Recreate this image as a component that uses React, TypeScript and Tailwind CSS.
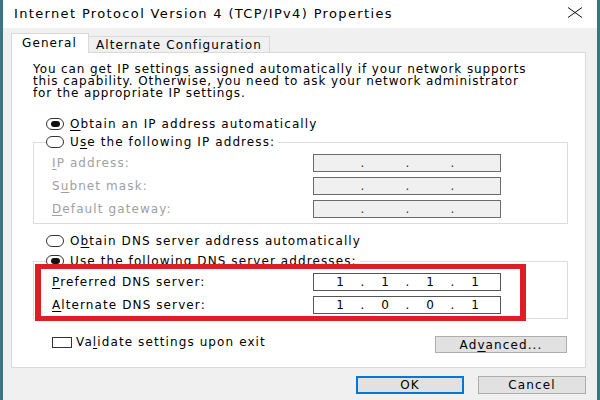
import { Fragment, ReactNode } from "react";

function Key({ children }: { children: ReactNode }) {
  return <span className="underline underline-offset-[2px]">{children}</span>;
}

function Radio({ checked }: { checked?: boolean }) {
  return (
    <span className="flex h-[12px] w-[18px] shrink-0 items-center justify-center rounded-full border border-[#333] bg-white">
      {checked && <span className="h-[6px] w-[9px] rounded-full bg-[#111]" />}
    </span>
  );
}

function RadioRow({ checked, children }: { checked?: boolean; children: ReactNode }) {
  return (
    <div className="flex h-[14px] items-center gap-[6px] bg-white pr-[3px]">
      <Radio checked={checked} />
      <span className="whitespace-nowrap">{children}</span>
    </div>
  );
}

function IpField({ octets, disabled }: { octets: string[]; disabled?: boolean }) {
  return (
    <div
      className={`flex h-[18px] w-[188px] items-center border pl-[8px] tracking-normal ${
        disabled ? "border-[#6b6b6b] bg-[#f0f0f0] text-[#333]" : "border-[#555] bg-white text-black"
      }`}
    >
      {octets.map((o, i) => (
        <Fragment key={i}>
          {i > 0 && <span className="w-[9px] text-center">.</span>}
          <span className="w-[36px] text-center">{o}</span>
        </Fragment>
      ))}
    </div>
  );
}

function FieldRow({ label, octets, disabled }: { label: ReactNode; octets: string[]; disabled?: boolean }) {
  return (
    <div className="flex h-[18px] items-center">
      <span className={`w-[261px] whitespace-nowrap ${disabled ? "text-[#a0a0a0]" : "text-black"}`}>{label}</span>
      <IpField octets={octets} disabled={disabled} />
    </div>
  );
}

const empty = ["", "", "", ""];

export default function App() {
  return (
    <div className="flex h-[400px] w-[600px] flex-col overflow-hidden border-x-[3px] border-[#3a7584] bg-[#f0f0f0] font-['DejaVu_Sans',sans-serif] text-[12px] leading-[14px] tracking-[1.1px] text-black">
      {/* title bar */}
      <div className="flex h-[28px] shrink-0 items-center justify-between bg-white pl-[11px] pr-[14px]">
        <span className="whitespace-nowrap text-[13px] tracking-[1.35px]">Internet Protocol Version 4 (TCP/IPv4) Properties</span>
        <svg width="16" height="11" viewBox="0 0 16 11" className="mt-[-4px]">
          <path d="M1 0.5 L15 10.5 M15 0.5 L1 10.5" stroke="#111" strokeWidth="1" fill="none" />
        </svg>
      </div>

      <div className="flex flex-1 flex-col pl-[8px] pr-[11px]">
        {/* tabs */}
        <div className="mt-[5px] flex h-[19px] items-end">
          <div className="relative z-10 -mb-px flex h-[20px] w-[78px] items-center border border-b-0 border-[#d9d9d9] bg-white pb-[2px] pl-[10px]">
            General
          </div>
          <div className="flex h-[16px] w-[181px] items-center whitespace-nowrap border border-b-0 border-l-0 border-[#d9d9d9] bg-[#f0f0f0] pl-[7px]">
            Alternate Configuration
          </div>
        </div>

        {/* panel */}
        <div className="flex h-[316px] flex-col border border-[#d9d9d9] bg-white pl-[21px] pr-[17px] pt-[10px]">
          <p className="whitespace-nowrap leading-[12px] tracking-[0.9px]">
            You can get IP settings assigned automatically if your network supports
            <br />
            this capability. Otherwise, you need to ask your network administrator
            <br />
            for the appropriate IP settings.
          </p>

          <div className="ml-[13px] mt-[18px]">
            <RadioRow checked>
              <Key>O</Key>btain an IP address automatically
            </RadioRow>
          </div>

          <fieldset className="mt-[4px] border border-[#dcdcdc] pb-[5px]">
            <legend className="ml-[12px]">
              <RadioRow>
                U<Key>s</Key>e the following IP address:
              </RadioRow>
            </legend>
            <div className="flex flex-col gap-[5px] pl-[18px] pt-[5px]">
              <FieldRow disabled octets={empty} label={<><Key>I</Key>P address:</>} />
              <FieldRow disabled octets={empty} label={<>S<Key>u</Key>bnet mask:</>} />
              <FieldRow disabled octets={empty} label={<><Key>D</Key>efault gateway:</>} />
            </div>
          </fieldset>

          <div className="ml-[13px] mt-[10px]">
            <RadioRow>
              O<Key>b</Key>tain DNS server address automatically
            </RadioRow>
          </div>

          <fieldset className="mt-[6px] border border-[#dcdcdc]">
            <legend className="ml-[12px]">
              <RadioRow checked>
                Us<Key>e</Key> the following DNS server addresses:
              </RadioRow>
            </legend>
            <div className="relative z-10 -mb-[3px] -mt-[4px] ml-[1px] flex w-[491px] flex-col gap-[5px] border-x-[6px] border-y-[5px] border-[#dc1f26] pb-[2px] pl-[11px] pt-[4px]">
              <FieldRow octets={["1", "1", "1", "1"]} label={<><Key>P</Key>referred DNS server:</>} />
              <FieldRow octets={["1", "0", "0", "1"]} label={<><Key>A</Key>lternate DNS server:</>} />
            </div>
          </fieldset>

          <div className="mt-[16px] flex items-start justify-between">
            <label className="ml-[19px] flex h-[14px] items-center gap-[4px]">
              <span className="h-[11px] w-[20px] border border-[#333] bg-white" />
              <span className="whitespace-nowrap">
                Va<Key>l</Key>idate settings upon exit
              </span>
            </label>
            <button className="mr-[1px] mt-[1px] flex h-[17px] w-[132px] items-center justify-center border border-[#adadad] bg-[#e1e1e1]">
              Ad<Key>v</Key>anced...
            </button>
          </div>
        </div>

        {/* dialog buttons */}
        <div className="mt-[8px] flex justify-end gap-[14px]">
          <button className="flex h-[18px] w-[108px] items-center justify-center border-2 border-[#0078d7] bg-[#e1e1e1]">
            OK
          </button>
          <button className="flex h-[18px] w-[108px] items-center justify-center border border-[#adadad] bg-[#e1e1e1]">
            Cancel
          </button>
        </div>
      </div>
    </div>
  );
}
